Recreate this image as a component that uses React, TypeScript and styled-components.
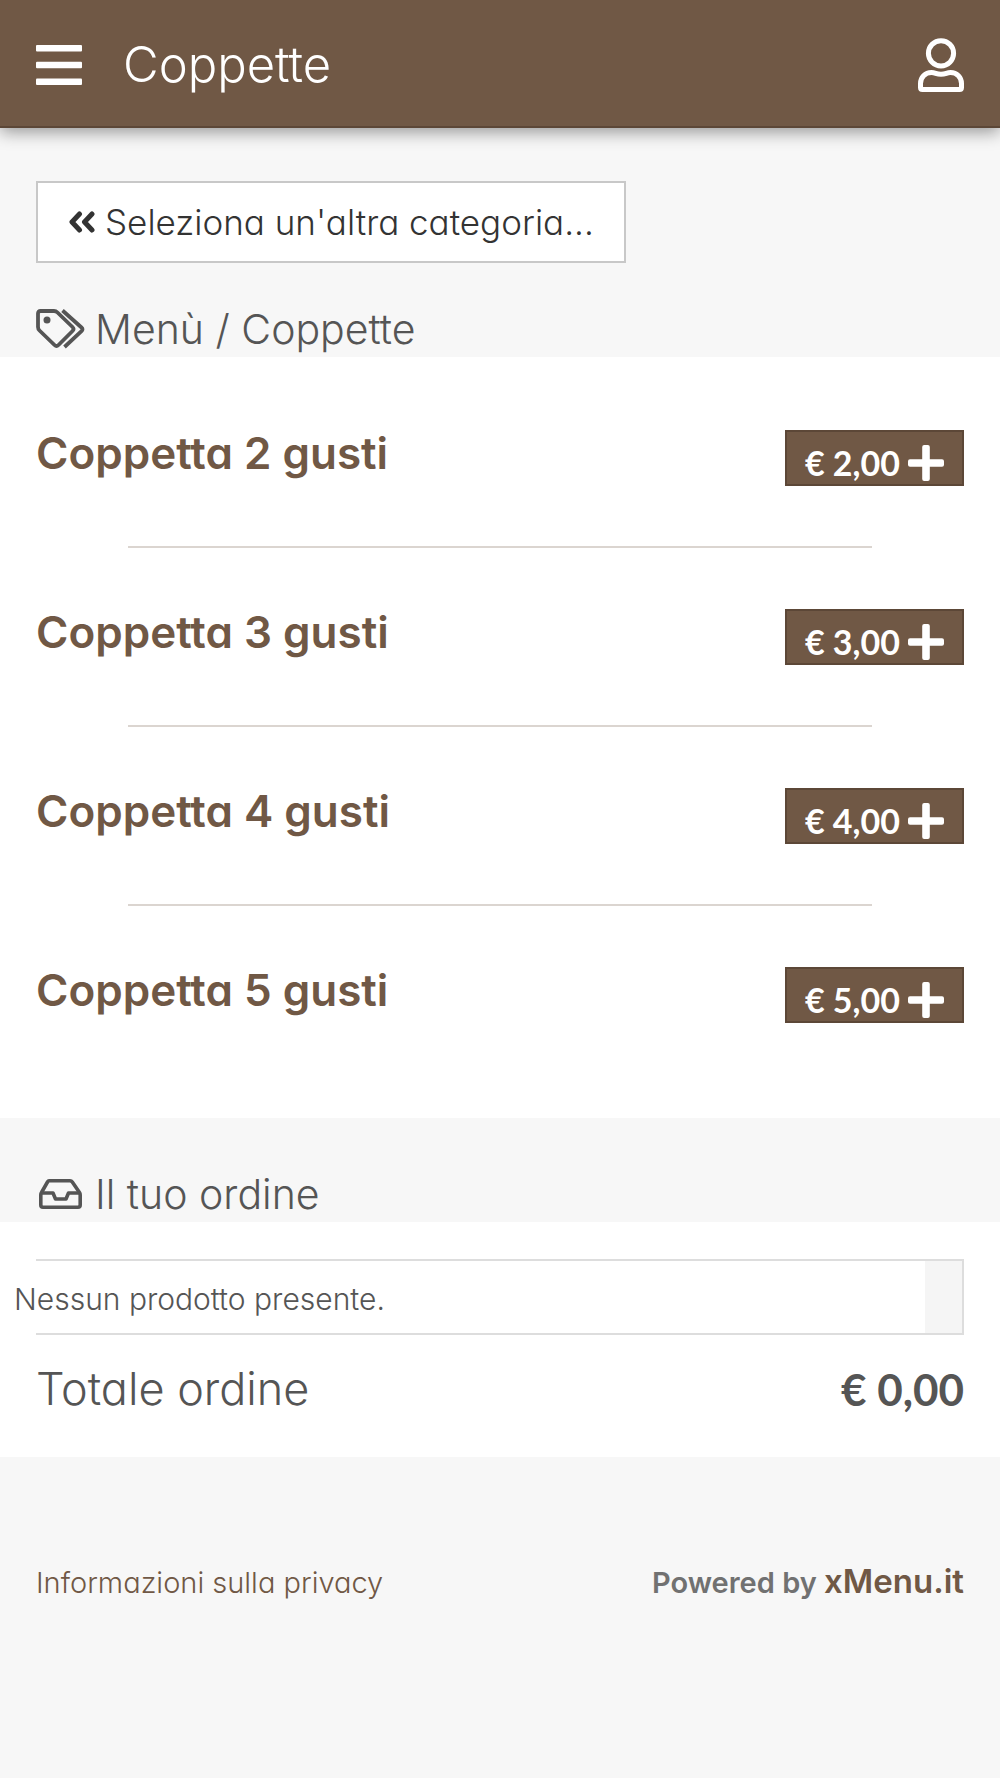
import React from "react";
import styled, { createGlobalStyle } from "styled-components";

const brand = "#705845";
const brandDark = "#5c4737";
const ink = "#555";

const GlobalStyle = createGlobalStyle`
  *, *::before, *::after { box-sizing: border-box; }
  html { background: #f7f7f7; }
  body {
    margin: 0;
    background: #f7f7f7;
    color: ${ink};
    font-family: Inter, "Open Sans", sans-serif;
    font-weight: 300;
    font-feature-settings: "cv11";
  }
  h1, h2, h3, p { margin: 0; font-weight: inherit; }
  svg { display: block; flex: none; }
`;

const Header = styled.header`
  display: flex;
  align-items: center;
  height: 128px;
  padding: 4px 36px 0;
  background: ${brand};
  border-bottom: 2px solid ${brandDark};
  box-shadow: 0 4px 16px rgba(0, 0, 0, 0.4);
  color: #fff;
`;

const IconButton = styled.button`
  padding: 0;
  border: 0;
  background: none;
  color: inherit;
  cursor: pointer;
`;

const PageTitle = styled.h1`
  flex: 1;
  margin-left: 41px;
  font-size: 49px;
  line-height: 56px;
`;

const Intro = styled.section`
  padding: 53px 36px 0;
`;

const BackButton = styled.button`
  display: flex;
  align-items: center;
  gap: 10px;
  height: 82px;
  padding: 0 30px 0 31px;
  border: 2px solid #c8c8c8;
  background: #fff;
  color: #333;
  font: inherit;
  font-feature-settings: inherit;
  font-size: 35px;
  white-space: nowrap;
  cursor: pointer;
`;

const SectionTitle = styled.h2<{ $top: number; $inset?: number }>`
  display: flex;
  align-items: center;
  gap: 10px;
  padding: ${(p) => p.$top}px 36px 3px ${(p) => p.$inset ?? 0}px;
  font-size: 41px;
  line-height: 50px;
`;

const Panel = styled.section`
  background: #fff;
`;

const ProductList = styled.ul`
  margin: 0;
  padding: 73px 36px 95px;
  list-style: none;
`;

const Product = styled.li`
  display: flex;
  align-items: flex-start;
  justify-content: space-between;
`;

const Divider = styled.li`
  height: 2px;
  margin: 60px 92px 61px;
  background: #dbd5d0;
`;

const ProductName = styled.h3`
  color: ${brand};
  font-size: 44px;
  font-weight: 600;
  line-height: 46px;
`;

const PriceButton = styled.button`
  display: flex;
  align-items: center;
  gap: 8px;
  height: 56px;
  padding: 9px 18px 0;
  border: 2px solid ${brandDark};
  background: ${brand};
  color: #fff;
  font-family: Lato, sans-serif;
  font-size: 34px;
  font-weight: 700;
  cursor: pointer;
`;

const OrderPanel = styled(Panel)`
  padding: 37px 36px 38px;
`;

const EmptyOrder = styled.div`
  display: flex;
  justify-content: space-between;
  height: 76px;
  border: 2px solid #ddd;
  border-left: 0;
`;

const EmptyText = styled.p`
  margin-left: -22px;
  font-size: 30px;
  line-height: 76px;
`;

const RemoveCell = styled.div`
  width: 37px;
  background: #f5f5f5;
`;

const Total = styled.div`
  display: flex;
  align-items: center;
  justify-content: space-between;
  padding-top: 24px;
  font-size: 45px;
  line-height: 60px;
`;

const TotalPrice = styled.strong`
  font-family: Lato, sans-serif;
  font-size: 44px;
  font-weight: 700;
`;

const Footer = styled.footer`
  display: flex;
  align-items: baseline;
  justify-content: space-between;
  padding: 100px 36px 160px;
  font-size: 29px;
  line-height: 48px;
`;

const FooterLink = styled.a`
  color: ${brand};
  text-decoration: none;
`;

const Powered = styled.p`
  color: #717171;
  font-weight: 600;
`;

const BrandLink = styled(FooterLink)`
  font-size: 33px;
`;

const MenuIcon = () => (
  <svg width="46" height="40" viewBox="0 0 46 40" fill="currentColor" aria-hidden="true">
    <rect width="46" height="6.4" rx="1" />
    <rect y="16.8" width="46" height="6.4" rx="1" />
    <rect y="33.6" width="46" height="6.4" rx="1" />
  </svg>
);

const UserIcon = () => (
  <svg width="46" height="54" viewBox="0 0 46 54" fill="none" stroke="currentColor" strokeWidth="5" strokeLinejoin="round" aria-hidden="true">
    <circle cx="23" cy="15.3" r="12.6" />
    <path d="M13.5 34.5C17.5 34.5 18 36.3 23 36.3S28.5 34.5 32.5 34.5C39 34.5 43.5 39.5 43.5 45.5V49.5Q43.5 51.5 41.5 51.5H4.5Q2.5 51.5 2.5 49.5V45.5C2.5 39.5 7 34.5 13.5 34.5Z" />
  </svg>
);

const BackIcon = () => (
  <svg width="26" height="22" viewBox="0 0 26 22" fill="none" stroke="currentColor" strokeWidth="5" strokeLinecap="round" strokeLinejoin="round" aria-hidden="true">
    <path d="M10.5 3L3 11L10.5 19M23 3L15.500 11L23 19" />
  </svg>
);

const TagsIcon = () => (
  <svg width="49" height="40" viewBox="0 0 49 40" fill="none" stroke="currentColor" strokeWidth="3.8" strokeLinejoin="round" aria-hidden="true">
    <path d="M4.5 2H18Q20 2 21.5 3.5L36.5 18Q38.5 20 36.5 22L22.5 36Q20.5 38 18.5 36L3.5 21.5Q2 20 2 18V4.5Q2 2 4.5 2Z" />
    <path d="M26.5 1.5L45.5 18.5Q47.5 20.3 45.5 22.2L28.5 38" />
    <circle cx="11" cy="11" r="3.5" fill="currentColor" stroke="none" />
  </svg>
);

const InboxIcon = () => (
  <svg width="49" height="30" viewBox="0 0 49 30" fill="none" stroke="currentColor" strokeWidth="3.6" strokeLinejoin="round" aria-hidden="true">
    <path d="M13 1.8H34Q35.5 1.8 36.3 3L43.5 13.5Q44.2 14.5 44.2 16V26Q44.2 28.2 42 28.2H7Q4.8 28.2 4.8 26V16Q4.8 14.5 5.5 13.5L11.5 3Q12.2 1.8 13 1.8Z" />
    <path d="M5.5 14H17L19.5 20H30L32.5 14H43.5" />
  </svg>
);

const PlusIcon = () => (
  <svg width="36" height="36" viewBox="0 0 36 36" fill="currentColor" aria-hidden="true">
    <rect x="14.2" width="7.6" height="36" rx="2" />
    <rect y="14.2" width="36" height="7.6" rx="2" />
  </svg>
);

const products = [
  { name: "Coppetta 2 gusti", price: "€ 2,00" },
  { name: "Coppetta 3 gusti", price: "€ 3,00" },
  { name: "Coppetta 4 gusti", price: "€ 4,00" },
  { name: "Coppetta 5 gusti", price: "€ 5,00" },
];

export default function App() {
  return (
    <>
      <GlobalStyle />
      <Header>
        <IconButton type="button" aria-label="Menu"><MenuIcon /></IconButton>
        <PageTitle>Coppette</PageTitle>
        <IconButton type="button" aria-label="Account"><UserIcon /></IconButton>
      </Header>
      <main>
        <Intro>
          <BackButton type="button"><BackIcon />Seleziona un'altra categoria...</BackButton>
          <SectionTitle $top={41}><TagsIcon />Menù / Coppette</SectionTitle>
        </Intro>
        <Panel>
          <ProductList>
            {products.map((product, i) => (
              <React.Fragment key={product.name}>
                {i > 0 && <Divider role="separator" />}
                <Product>
                  <ProductName>{product.name}</ProductName>
                  <PriceButton type="button">{product.price}<PlusIcon /></PriceButton>
                </Product>
              </React.Fragment>
            ))}
          </ProductList>
        </Panel>
        <SectionTitle $top={51} $inset={36}><InboxIcon />Il tuo ordine</SectionTitle>
        <OrderPanel>
          <EmptyOrder>
            <EmptyText>Nessun prodotto presente.</EmptyText>
            <RemoveCell />
          </EmptyOrder>
          <Total>
            <span>Totale ordine</span>
            <TotalPrice>€ 0,00</TotalPrice>
          </Total>
        </OrderPanel>
      </main>
      <Footer>
        <FooterLink href="#privacy">Informazioni sulla privacy</FooterLink>
        <Powered>Powered by <BrandLink href="#xmenu">xMenu.it</BrandLink></Powered>
      </Footer>
    </>
  );
}
